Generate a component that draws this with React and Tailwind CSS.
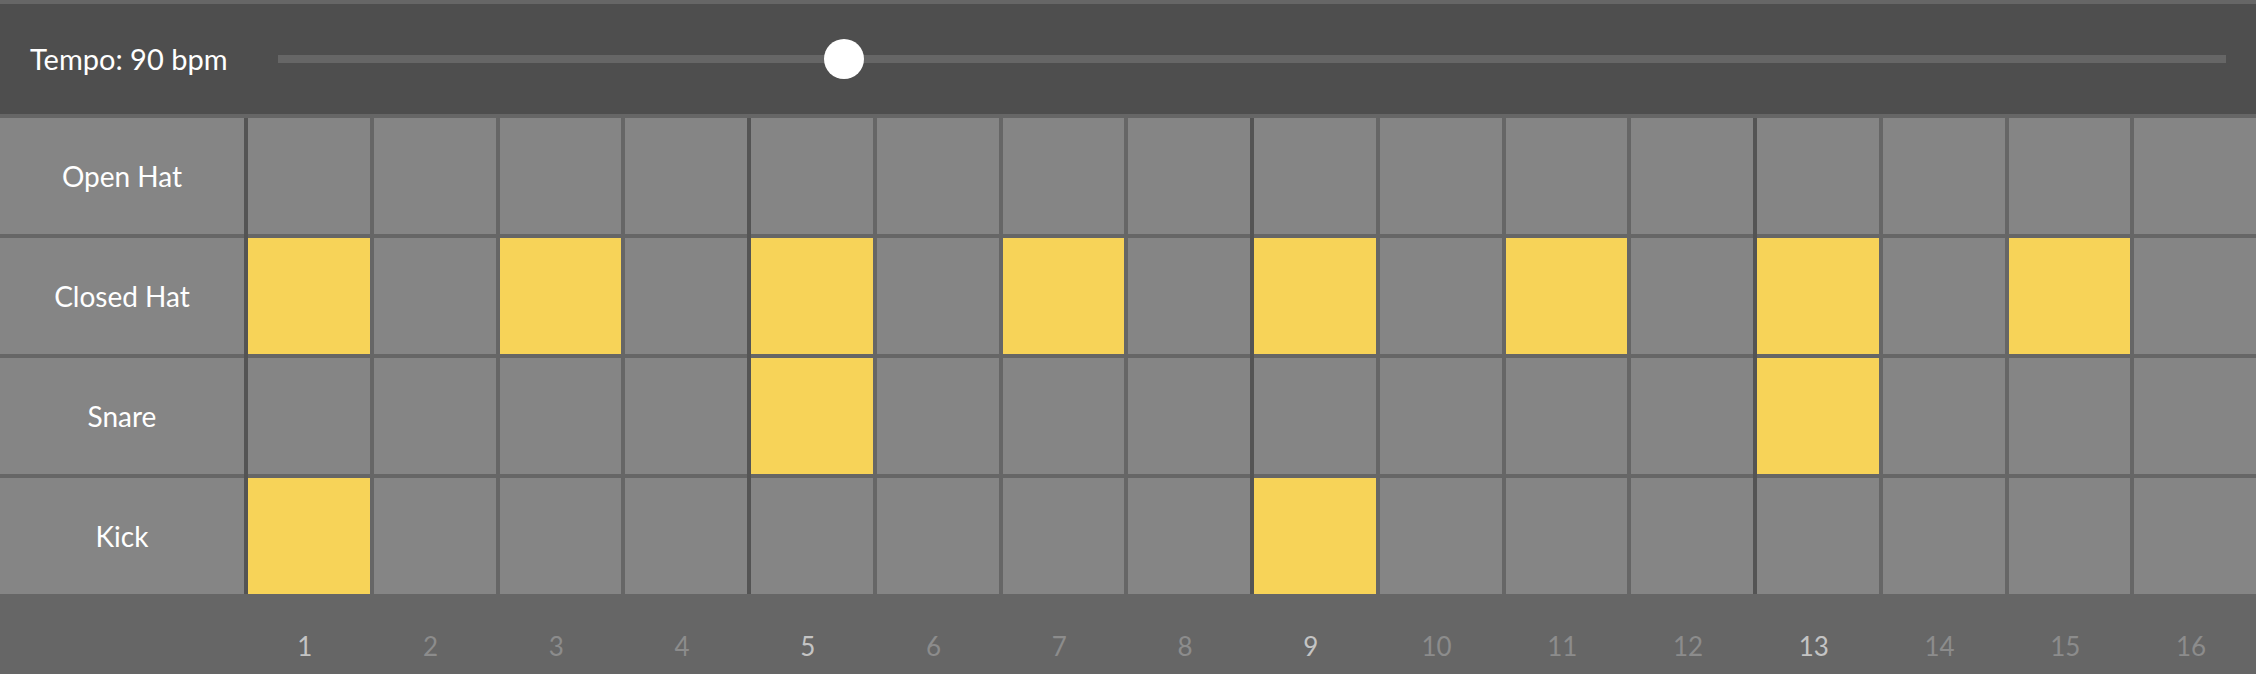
import React from "react"

const tracks = [
    { name: "Open Hat", steps: [] },
    { name: "Closed Hat", steps: [1, 3, 5, 7, 9, 11, 13, 15] },
    { name: "Snare", steps: [5, 13] },
    { name: "Kick", steps: [1, 9] },
]

const steps = Array.from({ length: 16 }, (_, i) => i + 1)

function Column({ step }) {
    const beat = (step - 1) % 4 === 0
    return (
        <div className={"flex-1 flex flex-col gap-1 border-l-4 " + (beat ? "border-[#545454]" : "border-[#666666]")}>
            {tracks.map((t) => (
                <div
                    key={t.name}
                    className={"h-[116px] " + (t.steps.includes(step) ? "bg-[#f7d358]" : "bg-[#858585]")}
                />
            ))}
        </div>
    )
}

function App() {
    return (
        <div className="w-[2256px] h-[674px] bg-[#666666] pt-1 overflow-hidden" style={{ fontFamily: "Lato, 'Open Sans', sans-serif" }}>
            <div className="h-[110px] bg-[#4e4e4e] flex items-center pl-[30px] pr-[30px]">
                <span className="text-white text-[29px] w-[248px] shrink-0">Tempo: 90 bpm</span>
                <div className="relative flex-1 h-2 bg-[#666666]">
                    <div className="absolute left-[29.05%] top-1/2 w-10 h-10 -ml-5 -mt-5 rounded-full bg-white" />
                </div>
            </div>

            <div className="flex mt-1">
                <div className="w-[244px] shrink-0 flex flex-col gap-1">
                    {tracks.map((t) => (
                        <div key={t.name} className="h-[116px] bg-[#858585] flex items-center justify-center text-white text-[28px]">
                            {t.name}
                        </div>
                    ))}
                </div>
                {steps.map((s) => (
                    <Column key={s} step={s} />
                ))}
            </div>

            <div className="flex h-[80px]">
                <div className="w-[244px] shrink-0" />
                {steps.map((s) => (
                    <div
                        key={s}
                        className={"flex-1 pr-1 pt-[39px] text-center text-[26px] leading-none " + ((s - 1) % 4 === 0 ? "text-[#c4c4c4]" : "text-[#8c8c8c]")}
                    >
                        {s}
                    </div>
                ))}
            </div>
        </div>
    )
}

export default App
